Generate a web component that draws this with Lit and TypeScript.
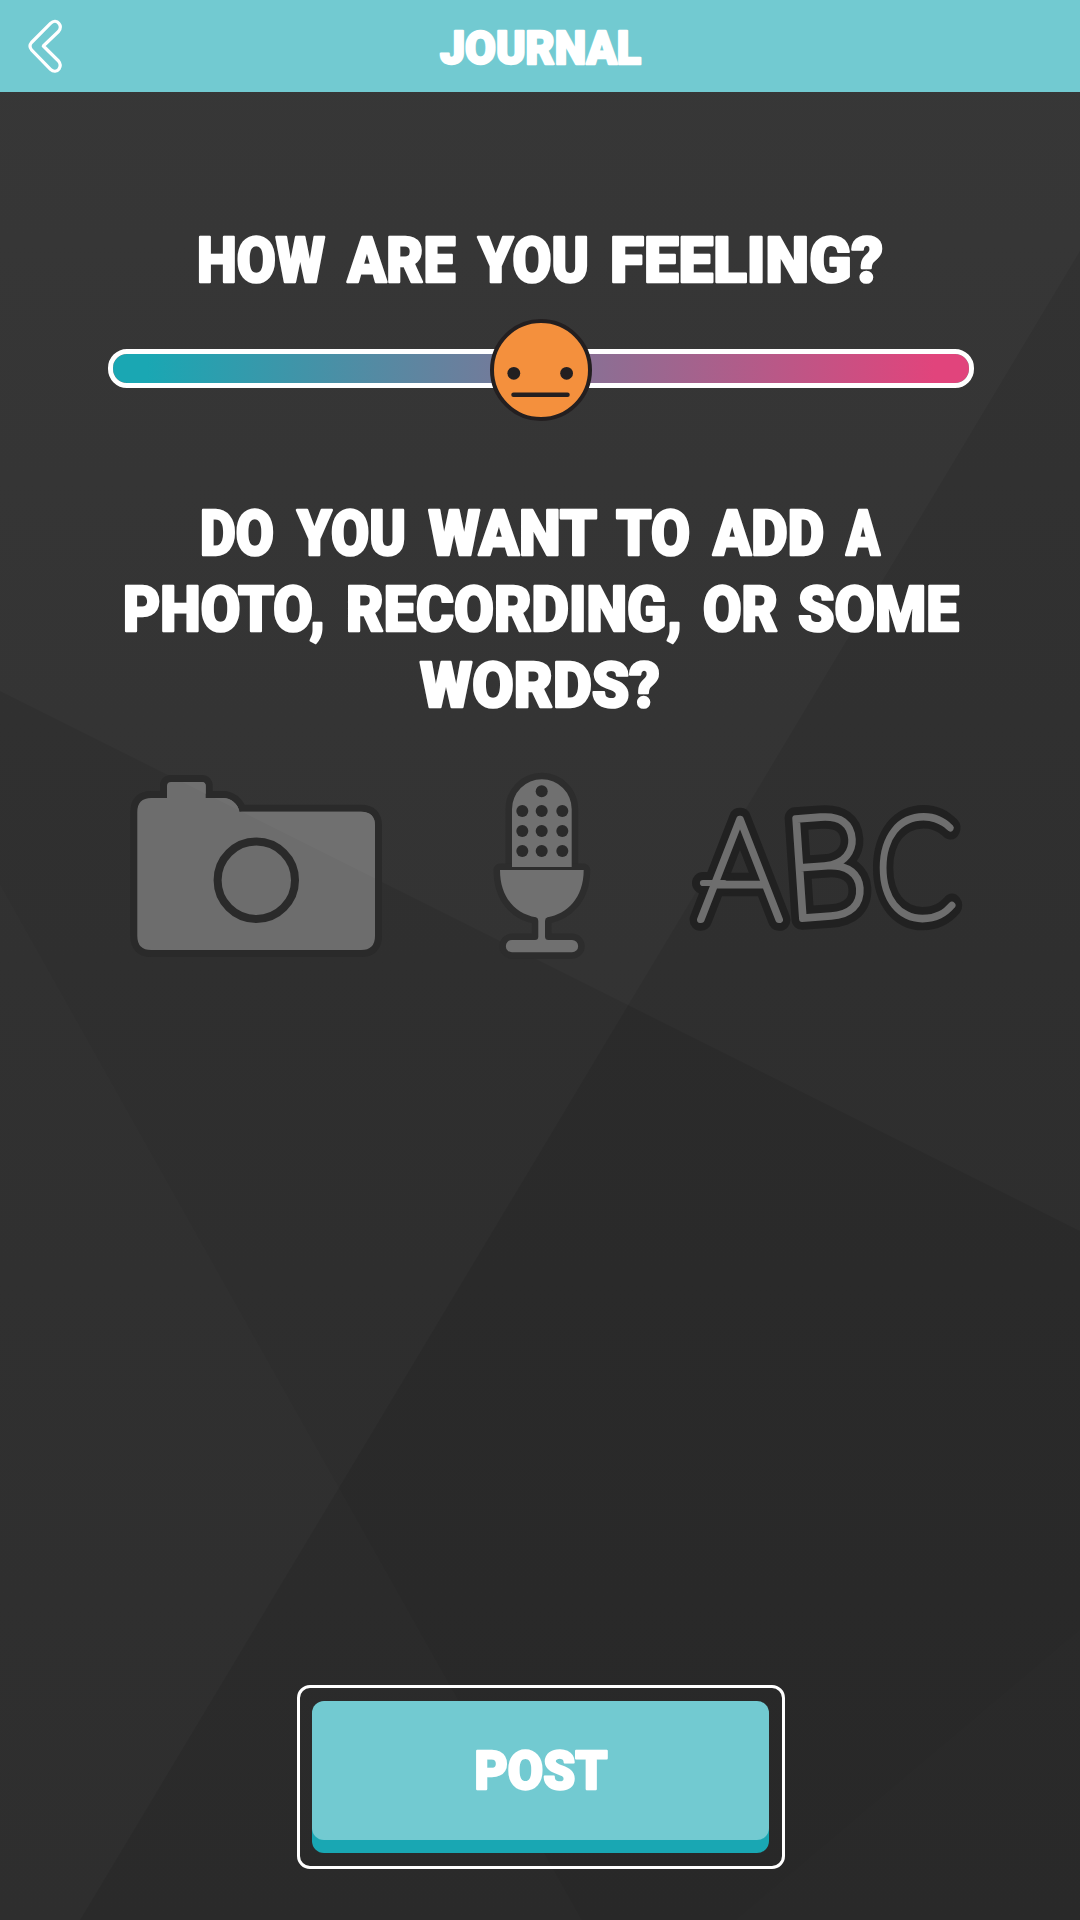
import { LitElement, html, svg, css } from "lit";
import { customElement } from "lit/decorators.js";

/** A word with its left edge and drawn width inside a line of lettering. */
type Word = [text: string, x: number, width: number];

const line = (words: Word[], y: number) => svg`<text y=${y}>${words.map(
  ([t, x, w], i) => svg`<tspan x=${x} textLength=${w} lengthAdjust="spacingAndGlyphs">${t}</tspan>${i < words.length - 1 ? " " : ""}`
)}</text>`;

const grille = [[541.7, 791.3], ...[811, 831, 851].flatMap((y) => [522.3, 541.7, 562.3].map((x) => [x, y]))];

@customElement("app-root")
export class AppRoot extends LitElement {
  static styles = css`
    :host { display: block; }
    * { box-sizing: border-box; }
    svg { display: block; overflow: visible; }
    h1, h2 { margin: 0; font-size: inherit; }
    button { border: 0; background: none; padding: 0; text-align: left; }
    .page {
      position: relative; width: 1080px; height: 1920px; overflow: hidden;
      display: flex; flex-direction: column; background: #353535;
    }
    .backdrop { position: absolute; inset: 0; }
    .bar {
      position: relative; height: 92px; flex: none; background: #72cad1;
      display: grid; grid-template-columns: 440px 201px 1fr; align-items: start;
    }
    .back { padding: 19px 0 0 28px; }
    .lettering text {
      font-family: Roboto, "Liberation Sans", sans-serif; font-weight: 900; fill: #fff;
      stroke: #fff; stroke-width: 2.5px; stroke-linejoin: round;
    }
    .title text { font-size: 47px; }
    .question text { font-size: 62.5px; }
    .label text { font-size: 54.5px; }
    .content { position: relative; flex: 1; display: flex; flex-direction: column; }
    .feeling { padding-top: 128px; }
    .slider { margin: 19px 0 0 108px; width: 866px; height: 102px; display: grid; align-items: center; justify-items: center; }
    .track, .face { grid-area: 1 / 1; }
    .track {
      width: 866px; height: 39px; margin-top: -3px; border-radius: 19px; border: 5px solid #fff;
      background: linear-gradient(90deg, #1aa7b3 4%, #e1447c 96%) padding-box;
    }
    .add { padding-top: 69px; }
    .media { display: flex; align-items: flex-start; gap: 110px; padding: 32px 0 0 129px; }
    .halo { stroke: #2a2a2a; stroke-width: 14px; stroke-linejoin: round; }
    .faint { stroke: #2d2d2d; stroke-width: 13px; }
    .abc { font-family: Lato, "Liberation Sans", sans-serif; font-weight: 100; font-size: 144px; stroke-linejoin: round; stroke-linecap: round; }
    .dark { stroke: #212121; fill: #212121; stroke-width: 22px; }
    .light { stroke: #6e6e6e; fill: #6e6e6e; stroke-width: 6.2px; }
    .post {
      display: block; width: 488px; height: 184px; margin: auto 0 51px 297px; padding: 13px 13px 26px 12px;
      border: 3px solid #fff; border-radius: 13px;
    }
    .key { display: block; height: 139px; border-radius: 12px; background: #72cad1; box-shadow: 0 13px #19a7b3; }
  `;

  render() {
    return html`
      <div class="page">
        <svg class="backdrop" width="1080" height="1920" viewBox="0 0 1080 1920">
          <defs><linearGradient id="shade" x1="0" y1="0" x2="0" y2="1">
            <stop offset="0" stop-color="#373737"/><stop offset=".5" stop-color="#333"/><stop offset="1" stop-color="#303030"/>
          </linearGradient></defs>
          <rect width="1080" height="1920" fill="url(#shade)"/>
          <path d="M1080 251 80 1920H1080Z" opacity=".07"/>
          <path d="M0 691 1080 1231V1920H0Z" opacity=".075"/>
          <path d="M0 884 582 1920H0Z" fill="#fff" opacity=".012"/>
          <path d="M1080 1629 735 1920H1080Z" fill="#fff" opacity=".006"/>
        </svg>

        <header class="bar">
          <button class="back" aria-label="Back">
            <svg width="34" height="54" viewBox="28 19 34 54" fill="none" stroke="#fff" stroke-width="3.200" stroke-linejoin="round">
              <path d="M50.500 23.300 31.500 42.500Q28.500 46 31.500 49.800L50.500 69.300C53.500 72.300 57 71.600 59 69 61 66 60.500 63.500 58.500 61L43.300 46 58.500 31.500C60.500 29 61 26 59 23.500 57 20.800 53.500 20.300 50.500 23.300Z"/>
            </svg>
          </button>
          <h1 class="title"><svg class="lettering" width="201" height="92" viewBox="440 0 201 92">${line([["JOURNAL", 440, 201]], 64)}</svg></h1>
        </header>

        <main class="content">
          <h2 class="feeling question">
            <svg class="lettering" width="1080" height="80" viewBox="0 220 1080 80">
              ${line([["HOW", 197, 128], ["ARE", 347.5, 108], ["YOU", 478, 111], ["FEELING?", 610, 273]], 282)}
            </svg>
          </h2>
          <div class="slider" role="slider" aria-valuenow="50">
            <div class="track"></div>
            <svg class="face" width="102" height="102" viewBox="490 319 102 102">
              <circle cx="541" cy="370" r="49" fill="#f4903d" stroke="#231f20" stroke-width="4"/>
              <circle cx="513.800" cy="373.300" r="6.400" fill="#231f20"/>
              <circle cx="566.600" cy="373.300" r="6.400" fill="#231f20"/>
              <path d="M513.500 394.700H567.500" stroke="#231f20" stroke-width="4.500" stroke-linecap="round"/>
            </svg>
          </div>
          <h2 class="add question">
            <svg class="lettering" width="1080" height="250" viewBox="0 490 1080 250">
              ${line([["DO", 200, 74], ["YOU", 297, 109], ["WANT", 428.5, 167], ["TO", 616, 74], ["ADD", 713, 111], ["A", 846, 34]], 555)}
              ${line([["PHOTO,", 123, 202], ["RECORDING,", 346, 336], ["OR", 703, 75], ["SOME", 798, 161]], 631)}
              ${line([["WORDS?", 420, 240]], 707)}
            </svg>
          </h2>
          <div class="media">
            <button aria-label="Photo">
              <svg width="254" height="184" viewBox="129 772 254 184">
                <defs>
                  <path id="body" d="M151.300 798H167V786Q167 782 171 782H201.700Q205.700 782 205.700 786V798H223C231 798 238 804 239.500 811.700H361Q375 811.700 375 825.700V936Q375 950 361 950H151.300Q137.300 950 137.300 936V812Q137.300 798 151.300 798Z"/>
                  <clipPath id="bodyClip"><use href="#body"/></clipPath>
                </defs>
                <use href="#body" class="halo" fill="#2a2a2a"/>
                <use href="#body" fill="#6d6d6d"/>
                <path d="M137 759.500 375 878.500V780H137Z" fill="#707070" clip-path="url(#bodyClip)"/>
                <circle cx="256.300" cy="880.300" r="38.700" fill="none" stroke="#2a2a2a" stroke-width="8"/>
              </svg>
            </button>
            <button aria-label="Recording">
              <svg width="88" height="184" viewBox="493 772 88 184">
                <defs>
                  <g id="mic">
                    <path d="M512 867V809.200A29.850 29.850 0 0 1 571.700 809.200V867Z"/>
                    <path d="M500 870H583.700C583.700 898 567 914 547.500 917.300Q545 918 545 921V936.500Q545 940 548.500 940H572A6.150 6.150 0 0 1 572 952.300H512A6.150 6.150 0 0 1 512 940H535Q538.300 940 538.300 936.500V921Q538.300 918 536 917.300C516 914 500 898 500 870Z"/>
                  </g>
                </defs>
                <use href="#mic" class="halo faint" fill="#2a2a2a"/>
                <use href="#mic" fill="#707070"/>
                ${grille.map(([x, y]) => svg`<circle cx=${x} cy=${y} r="6" fill="#2a2a2a"/>`)}
              </svg>
            </button>
            <button aria-label="Words">
              <svg class="abc" width="272" height="184" viewBox="691 772 272 184">
                <use href="#letters" class="dark"/>
                <path class="dark" d="M703 883H724"/>
                <g class="light">
                  <path d="M703 883H724"/>
                  <text id="letters"><tspan x="697" y="920" textLength="86" lengthAdjust="spacingAndGlyphs">A</tspan><tspan x="786" y="920" textLength="86" lengthAdjust="spacingAndGlyphs" rotate="-4">B</tspan><tspan x="874" y="919" textLength="84" lengthAdjust="spacingAndGlyphs">C</tspan></text>
                </g>
              </svg>
            </button>
          </div>
          <button class="post">
            <span class="key">
              <svg class="lettering label" width="457" height="139" viewBox="312 1701 457 139">${line([["POST", 474.5, 133]], 1789.3)}</svg>
            </span>
          </button>
        </main>
      </div>`;
  }
}
